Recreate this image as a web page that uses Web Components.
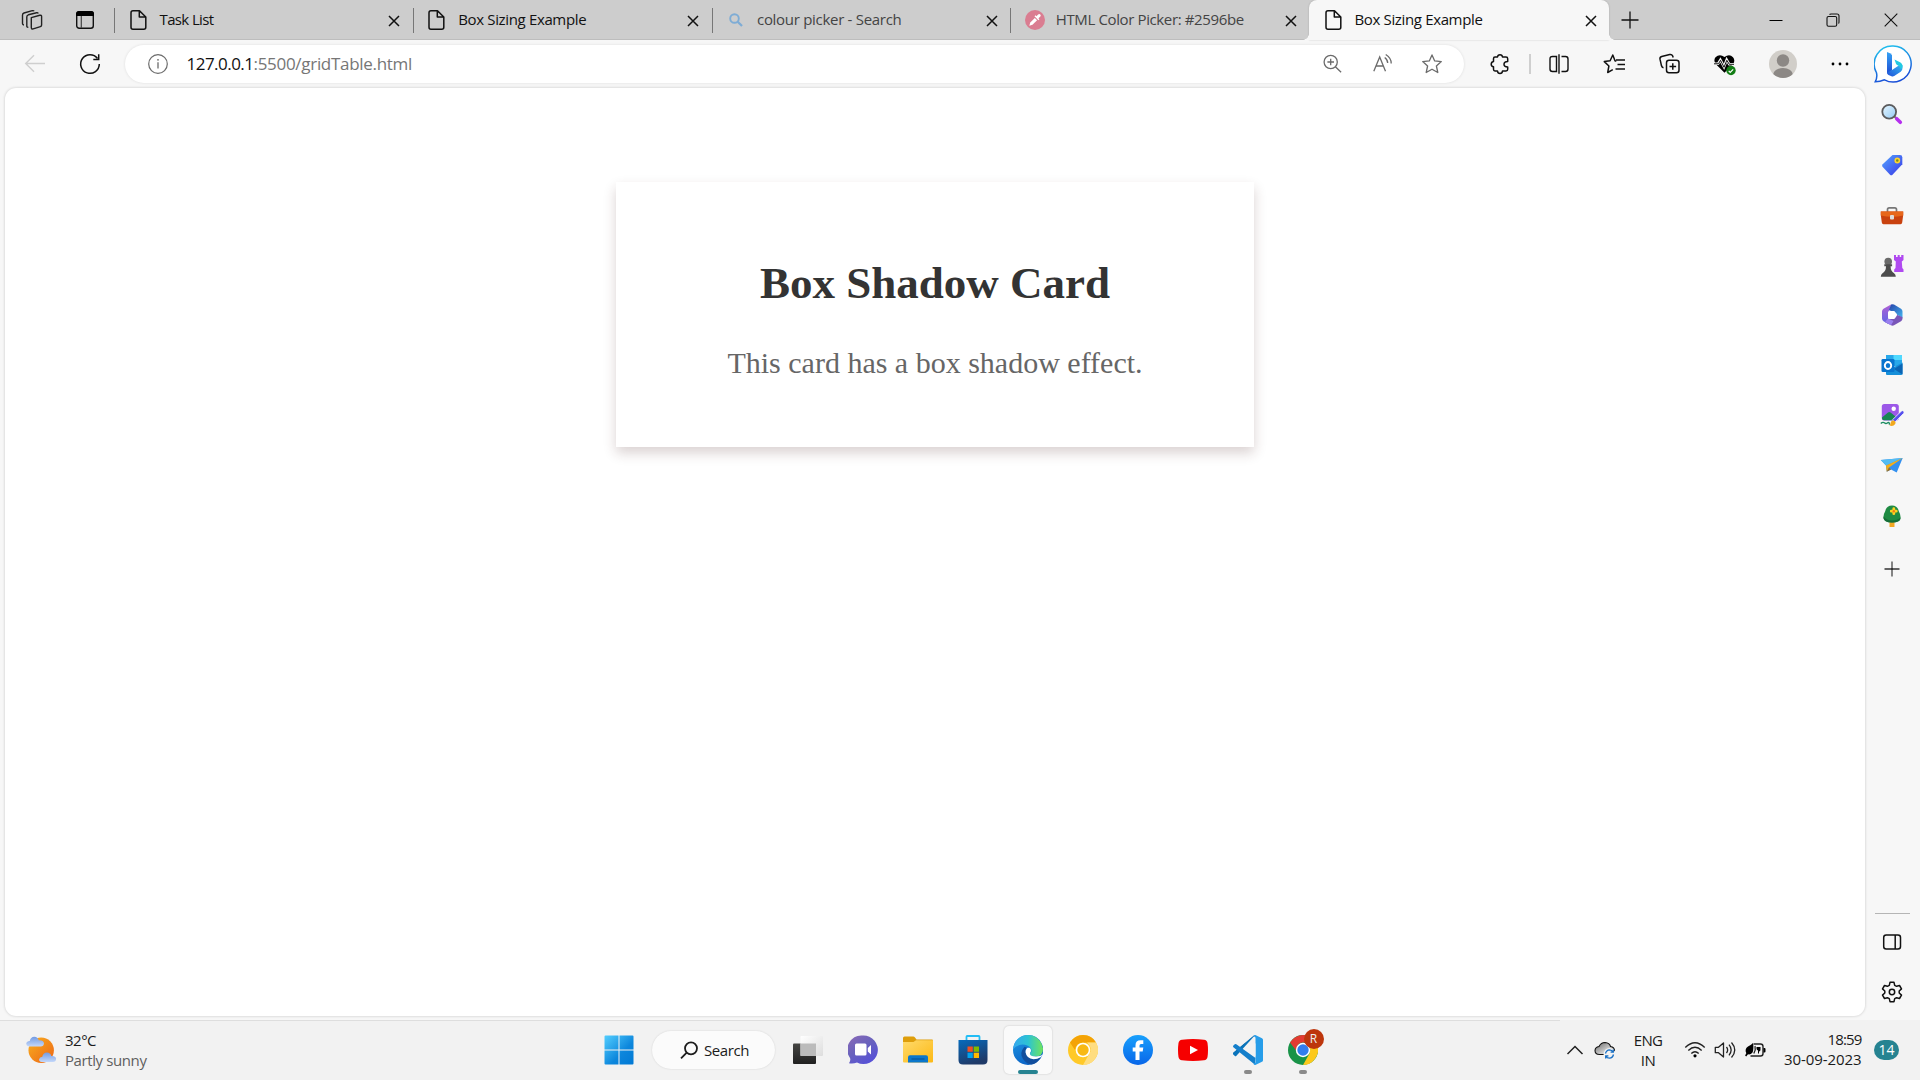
<!DOCTYPE html>
<html lang="en">
<head>
<meta charset="utf-8">
<title>Box Sizing Example</title>
<style>
html,body{margin:0;height:100%;overflow:hidden;background:#f7f7f7}
body{font-family:"Open Sans","Noto Sans",sans-serif}
</style>
</head>
<body>
<desktop-screen></desktop-screen>
<script>
const ICONS = {
workspaces:[24,24,`<g fill="none" stroke="#222" stroke-width="1.4" stroke-linejoin="round"><path d="M11.3 9.6l8.500-2.300q1.800-.4 1.800 1.300v8.400q0 1.200-1.200 1.600l-7.200 2.300q-1.900.5-1.900-1.300z"/><path d="M8.300 19.300q-1.500.2-1.500-1.400V9q0-1.700 1.600-2.200l8.200-2.100q1.300-.2 1.600.8"/><path d="M4 17q-1.500 0-1.500-1.400V7.200Q2.500 5.500 4 5l8.300-2.300q1.400-.3 1.700.6"/></g>`],
tabact:[24,24,`<rect x="3.700" y="3.700" width="16.600" height="16.600" rx="2.500" fill="none" stroke="#111" stroke-width="1.400"/><path d="M3 8V6q0-3 3-3h12q3 0 3 3v2z" fill="#000"/><path d="M8.300 8v12" stroke="#444" stroke-width="1.200"/>`],
page:[24,24,`<path d="M6 2.700h6.500l6.300 6.300v10.200q0 2-2 2H6q-2 0-2-2V4.700q0-2 2-2z M12.300 3v6h6.300" fill="none" stroke="#111" stroke-width="1.500" stroke-linejoin="round"/>`],
lens:[24,24,`<g fill="none" stroke="#7eacd5" stroke-width="1.900"><circle cx="10.500" cy="10.500" r="4.300"/><path d="M13.700 13.700l4.300 4.300" stroke-width="2.300"/></g>`],
picker:[24,24,`<circle cx="12" cy="12" r="10" fill="#da7d91"/><path d="M6.300 17.700l1-3.200 4.500-4.600 2.300 2.300-4.600 4.500z" fill="#fff"/><path d="M11.500 8.300l1-1 1 1 1.600-1.800q1.200-1.100 2.200 0 1 1.100-.1 2.200l-1.800 1.600 1 1-1 1z" fill="#fff"/>`],
x:[12,12,`<path d="M1 1l10 10M11 1L1 11" stroke="#111" stroke-width="1.500"/>`],
plus:[18,18,`<path d="M9 .5v17M.5 9h17" stroke="#111" stroke-width="1.300"/>`],
plus2:[16,16,`<path d="M8 .5v15" stroke="#777" stroke-width="1.800"/><path d="M.5 8h15" stroke="#000" stroke-width="1.200"/>`],
min:[14,14,`<path d="M.5 7.500h13" stroke="#000" stroke-width="1"/>`],
restore:[14,14,`<rect x="1" y="3.500" width="9.700" height="9.700" rx="1.500" fill="none" stroke="#111" stroke-width="1.100"/><path d="M3.500 1.500Q4 1 5 1h6q2 0 2 2v6q0 1-.5 1.500" fill="none" stroke="#111" stroke-width="1.100"/>`],
close:[14,14,`<path d="M.7.7l12.600 12.600M13.300.7L.7 13.300" stroke="#111" stroke-width="1.100"/>`],
back:[24,24,`<path d="M22 11.500H3M11 3.300L2.700 11.500 11 19.700" fill="none" stroke="#cfcfcf" stroke-width="1.400"/>`],
reload:[24,24,`<path d="M19.500 6.500A9.300 9.300 0 1 0 21.300 12" fill="none" stroke="#111" stroke-width="1.500"/><path d="M20.700 2.300v5.300h-5.400" fill="none" stroke="#111" stroke-width="1.500"/>`],
info:[24,24,`<circle cx="12" cy="12" r="9.300" fill="none" stroke="#6b6b6b" stroke-width="1.200"/><path d="M12 10.300v6.200" stroke="#6b6b6b" stroke-width="1.300"/><circle cx="12" cy="7.800" r=".9" fill="#6b6b6b"/>`],
zoom:[24,24,`<g fill="none" stroke="#6b6b6b" stroke-width="1.300"><circle cx="10.700" cy="10" r="6.600"/><path d="M15.400 14.700l5.700 5.500M7.400 10h6.600M10.700 6.700v6.600"/></g>`],
read:[24,24,`<g fill="none" stroke="#6b6b6b" stroke-width="1.300"><path d="M2.800 19.200L8.700 5l5.800 14.200M5 14h7.400"/><path d="M13.700 5.500q3 2.300 3 5.500M14.700 2.500q5.700 3.500 5.500 9"/></g>`],
star:[24,24,`<path d="M12 2.900l2.700 6 6.600.7-4.900 4.400 1.400 6.500L12 17.200l-5.800 3.300L7.600 14 2.700 9.600l6.600-.7z" fill="none" stroke="#6b6b6b" stroke-width="1.300" stroke-linejoin="round"/>`],
puzzle:[24,24,`<path d="M7 5h2.500q.2-2.300 2.500-2.300T14.500 5H18q1.700 0 1.700 1.700V9.500q-3.700.1-3.700 2.700t3.700 2.700V17.300q0 1.700-1.700 1.700h-3.500q-.2 2.500-2.500 2.500T9.500 19H7q-1.500 0-1.500-1.700v-2.500q-2.300-.3-2.300-2.600T5.500 9.500V6.700Q5.500 5 7 5z" fill="none" stroke="#111" stroke-width="1.500" stroke-linejoin="round"/>`],
split:[24,24,`<g fill="none" stroke="#111" stroke-width="1.400"><path d="M9.500 4.500h-4q-2.500 0-2.500 2.500v10q0 2.500 2.500 2.500h4zM14.500 4.500h4Q21 4.500 21 7v10q0 2.500-2.500 2.500h-4"/><path d="M12 2.300v19.500"/></g>`],
favs:[24,24,`<g fill="none" stroke="#111" stroke-width="1.500" stroke-linejoin="round"><path d="M13.300 8.900h-1.200L9.800 3 7.100 8.700l-5.800.9 4.600 4.400-1.200 6.500 5.100-2.800"/><path d="M13 7.900h9M14.500 12.400H22M12.500 17H22"/></g>`],
coll:[24,24,`<g fill="none" stroke="#111" stroke-width="1.500"><rect x="8.500" y="8.200" width="12.500" height="12.500" rx="2.500"/><path d="M14.800 11.200v6.600M11.500 14.500h6.600"/><path d="M5.500 15.700q-1.500-.2-2-1.900L2 7.200q-.4-2.100 1.700-2.700l8-2q2.100-.4 2.900 1.300l.6 1.700"/></g>`],
heart:[24,24,`<path d="M11.500 20.700L2.700 12Q.2 8.500 2.500 5.300 6.500 1.200 11.500 5q5-3.800 8.500.3 2.500 3.200.2 6.700z" fill="#000"/><path d="M0 11.800h5l2.400-4 3.600 7 2.700-7 2.600 4.500h6" fill="none" stroke="#f7f7f7" stroke-width="2.600"/><path d="M1 11.800h4.500l2-3.500 3.500 7 2.800-7 2.500 4H21" fill="none" stroke="#111" stroke-width="1"/><circle cx="18" cy="18.500" r="4.700" fill="#127d14"/><path d="M15.700 18.800l1.500 1.500 3-3" stroke="#fff" fill="none" stroke-width="1.200"/>`],
avatar:[28,28,`<clipPath id="a"><circle cx="14" cy="14" r="14"/></clipPath><g clip-path="url(#a)"><rect width="28" height="28" fill="#d1cec9"/><circle cx="14" cy="10.500" r="6.200" fill="#8c8885"/><ellipse cx="14" cy="25" rx="10" ry="7" fill="#8c8885"/></g>`],
dots:[24,24,`<circle cx="5" cy="12" r="1.400"/><circle cx="12" cy="12" r="1.400"/><circle cx="19" cy="12" r="1.400"/>`],
bing:[38,38,`<defs><linearGradient id="b" x2=".3" y2="1"><stop stop-color="#20c9ee"/><stop offset="1" stop-color="#1a50d8"/></linearGradient><linearGradient id="c" x2="0" y2="1"><stop stop-color="#35a3f5"/><stop offset="1" stop-color="#1d4cd2"/></linearGradient><linearGradient id="d" x1="1" y1="0" x2="0" y2="1"><stop stop-color="#35b8f2"/><stop offset="1" stop-color="#2050d8"/></linearGradient></defs><path d="M19 1a18 18 0 1 1-8.500 33.800q-4.500 1.900-9.300 2 2.500-4.500 1.200-9.300A18 18 0 0 1 19 1z" fill="#fff" stroke="url(#b)" stroke-width="1.500"/><path d="M13 7q3.500.8 5 3v15.500L14 29l-1-1.500z" fill="url(#c)"/><path d="M13 27.500l5-2.500 7.500-5h3v3q0 2.500-1.800 3.800l-6.500 4.300q-1.300.8-2.700.2l-3-1.200q-1.500-.8-1.500-2.600z" fill="url(#d)"/><path d="M20.500 14.500l6 3q2 1.200 2 3.700 0 2.500-2 3.600.5-3-2.500-4.300-1.500-.5-2-1.700z" fill="#22cbe2"/>`],
slens:[24,24,`<defs><linearGradient id="a" x2="1" y2="1"><stop stop-color="#e8f7ff"/><stop offset="1" stop-color="#92c9f4"/></linearGradient></defs><path d="M14.500 14.500l3 3" stroke="#777" stroke-width="2"/><path d="M16.700 16.700l3.600 3.600" stroke="#b52fee" stroke-width="3.600" stroke-linecap="round"/><circle cx="9.200" cy="9.800" r="6.900" fill="url(#a)" stroke="#5b5b5d" stroke-width="1.800"/>`],
tag:[24,24,`<defs><linearGradient id="a" x2="1" y2="1"><stop stop-color="#54a6ff"/><stop offset="1" stop-color="#3935e6"/></linearGradient></defs><path d="M12.500 2h7.500q2.300 0 2.300 2.300v7L12.500 21.700q-1.200 1-2.500 0l-7.500-8q-.9-1.200.2-2.400z" fill="url(#a)"/><circle cx="17.300" cy="7.500" r="2.100" fill="#75901c" stroke="#ffd32f" stroke-width="1.600"/>`],
toolbox:[24,24,`<path d="M7.500 8V5.500q0-1.700 1.700-1.700h5.600q1.700 0 1.700 1.700V8" fill="none" stroke="#777" stroke-width="1.700"/><path d="M.8 7.500h22.400v3.500l-1 7.500q-.2 1.800-1.700 1.800h-17q-1.500 0-1.700-1.800L.8 11z" fill="#c9420f"/><path d="M.8 7.500h22.400v4q-11 2.500-22.400 0z" fill="#e7671b"/><rect x="10" y="11" width="4" height="4.500" rx="1" fill="#ddd"/>`],
chess:[24,24,`<path d="M14 2h2v2h1.700V2h2v2h1.500V2h2.300v5l-1.700 1.500L22.300 15l1.200 1.500V19h-9.300v-2.500l1.300-1.500.3-6.500L14 7z" fill="#b04af0"/><circle cx="8.200" cy="8.500" r="3.800" fill="#6a6a6a"/><path d="M4.300 11.300h7.800v2h-1.500q0 5 3.500 7 1.700 1 1.700 3.500H.8q0-2.500 1.700-3.500 3.500-2 3.500-7H4.300z" fill="#4c4c4c"/>`],
m365:[24,24,`<defs><linearGradient id="a" x2="0" y2="1"><stop stop-color="#b05fd5"/><stop offset="1" stop-color="#5e66e4"/></linearGradient><linearGradient id="b" x2="1" y2="1"><stop stop-color="#2541a8"/><stop offset="1" stop-color="#43b5f0"/></linearGradient></defs><path d="M11 1.500L3.500 5.700Q2 6.700 2 8.500v7q0 1.800 1.500 2.800l4.500 2.500V10q0-2 1.800-3z" fill="url(#a)"/><path d="M11 1.500q1.500-.7 3 .1l7 4.100q1.500 1 1.500 2.800v6.200l-5.500-3V11L9 7z" fill="url(#b)"/><path d="M22.500 14v1.500q0 1.800-1.500 2.800l-7 4q-1.500.8-3 0L5 19l11-7.500z" fill="#7956b8"/><path d="M5 19l3-3.500 5.500 2.500-2.500 4.200z" fill="#9a80ef"/><path d="M10.300 8h3.400q1 0 1.500.9l1.600 2.300q.4.800 0 1.600l-1.600 2.300q-.5.900-1.500.9h-3.400q-1 0-1.500-.9L8 12.800V9.500z" fill="#fff"/>`],
outlook:[24,24,`<path d="M6 2h15q1 0 1 1v10H6z" fill="#28a8ea"/><path d="M13.500 2H21q1 0 1 1v4h-8.500z" fill="#50d9ff"/><path d="M6 10l8 4 8.500-4.500v11q0 1.500-1.500 1.500H7q-1 0-1-1z" fill="#168fd9"/><path d="M22.500 10.500v11L14 16z" fill="#0b64b3"/><rect x="1.500" y="6" width="13" height="13" rx="1.300" fill="#0874ce"/><ellipse cx="8" cy="12.500" rx="3.200" ry="3.500" fill="none" stroke="#fff" stroke-width="1.900"/>`],
paint:[24,24,`<rect x="1.800" y="1" width="17" height="16.500" rx="2.500" fill="#9c58e8"/><path d="M2 14.500l6-5q1.200-1 2.500 0l7 5.500q-1 2.300-3 2.300H4q-2 0-2-2.800z" fill="#178653"/><circle cx="13.700" cy="5.700" r="2.200" fill="#fff"/><path d="M12.500 16.700l8.800-8.500q1.300-1.100 2.400 0 .8 1.100-.2 2.300l-8.600 8.700z" fill="#5750ee" stroke="#f7f7f7" stroke-width=".8"/><path d="M9.500 22.500q1-1.200 1.200-3 .8-2.500 3-2 2.700 1 1.500 3.500-2 2.800-5.700 1.500z" fill="#f2a91d"/><path d="M.8 20.500q2-2 4-.5 1 1.200 3-.3 2-.7 1.500 2" fill="none" stroke="#1b8d61" stroke-width="1.400"/>`],
plane:[24,24,`<path d="M.8 7L22.700 5 16.700 19.500l-5.700-3-4.300 2.300-.7-6.300z" fill="#3390ef"/><path d="M.8 7L22.700 5 6 12.500z" fill="#54bcf2"/><path d="M6 12.500L22.700 5 9 14.500l-2.300 4.300z" fill="#f5ae16"/><path d="M6.700 18.800L9 14.500l2 2z" fill="#a66b16"/>`],
tree:[24,24,`<rect x="9.500" y="16" width="5" height="7" rx=".5" fill="#f3a822"/><path d="M12 1.500q5.500 0 6.700 5.500 2.300 4 1.800 7.500-1 4-8.500 4t-8.500-4Q3 11 5.300 7 6.500 1.500 12 1.500z" fill="#1f8b43"/><path d="M3.500 12.500q3 4 8.500 4t8.500-3q.5 5-8.500 5-9 0-8.500-6z" fill="#166d38"/><path d="M13.800 4.700v5M11.300 7.200h5" stroke="#ffd321" stroke-width="2.800" stroke-linecap="round"/><circle cx="13.800" cy="7.200" r="1.200" fill="#f27b17"/>`],
panel:[24,24,`<rect x="3.700" y="5" width="16.800" height="14" rx="2.500" fill="none" stroke="#111" stroke-width="1.500"/><path d="M15.200 5v14" stroke="#111" stroke-width="1.500"/>`],
gear:[24,24,`<path d="M10 2.300h4l.7 3 1.900 1 2.900-.8 2 3.400-2.300 2.100v2l2.300 2.100-2 3.400-2.900-.8-1.900 1-.7 3h-4l-.7-3-1.900-1-2.900.8-2-3.400L4.800 13v-2L2.500 8.900l2-3.400 2.900.8 1.900-1z" fill="none" stroke="#111" stroke-width="1.500" stroke-linejoin="round"/><circle cx="12" cy="12" r="2.700" fill="none" stroke="#111" stroke-width="1.500"/>`],
weather:[32,32,`<defs><linearGradient id="a" x2="1" y2="1"><stop stop-color="#f9b01f"/><stop offset="1" stop-color="#ec6416"/></linearGradient><linearGradient id="b" x2="0" y2="1"><stop stop-color="#729be4"/><stop offset="1" stop-color="#c4d8fa"/></linearGradient></defs><circle cx="16.200" cy="16.300" r="12.700" fill="url(#a)"/><path d="M4 12.500Q1.200 12 1.200 9.800 1.700 7 4.700 7q.8-4 4.700-4.200 3.300.2 4.300 3.500 4.800-.3 5.300 3-.3 3.200-3.300 3.200z" fill="url(#b)"/><path d="M16.600 28q-2.800-.5-2.500-2.800.5-2.400 3.200-2.500.7-4 4.700-4.200 3.500.2 4.300 3.500 4.300-.3 4.800 2.800-.2 3.200-3.200 3.200z" fill="url(#b)"/>`],
win:[30,30,`<defs><linearGradient id="a" gradientUnits="userSpaceOnUse" x1="0" y1="0" x2="30" y2="30"><stop stop-color="#55d0ff"/><stop offset=".6" stop-color="#0c86dc"/><stop offset="1" stop-color="#0078d4"/></linearGradient></defs><path d="M1.500.5h13v14h-14v-13q0-1 1-1zM15.500.5h13q1 0 1 1v13h-14zM.5 15.500h14v14h-13q-1 0-1-1zM15.500 15.500h14v13q0 1-1 1h-13z" fill="url(#a)"/>`],
tlens:[18,18,`<g fill="none" stroke="#1c1c1c" stroke-width="1.800"><circle cx="11" cy="7.300" r="6"/><path d="M6.700 11.600L1 17.300"/></g>`],
taskview:[30,30,`<defs><linearGradient id="a" x2="0" y2="1"><stop stop-color="#454543"/><stop offset="1" stop-color="#202020"/></linearGradient><linearGradient id="b" x2="1" y2="1"><stop stop-color="#fff"/><stop offset="1" stop-color="#ddd"/></linearGradient></defs><rect x="0" y="8.500" width="23" height="20.500" rx="1" fill="url(#a)"/><rect x="7.500" y="1" width="22.500" height="20" rx="1" fill="url(#b)"/><rect x="7.500" y="8.500" width="15.500" height="12.500" fill="#bbb"/>`],
chat:[30,30,`<defs><linearGradient id="a" x2=".7" y2="1"><stop stop-color="#8c6ab6"/><stop offset=".5" stop-color="#6962bd"/><stop offset="1" stop-color="#5650d8"/></linearGradient></defs><path d="M15 .5a14.300 14.300 0 1 1-6 27q-4 1.500-8 .7 2-3 1-5.200A14.300 14.300 0 0 1 15 .5z" fill="url(#a)"/><rect x="7" y="8.500" width="11.500" height="12" rx="1.500" fill="#fff"/><path d="M19.800 13l3.200-3v9.500l-3.200-3z" fill="#fff"/>`],
folder:[30,30,`<defs><linearGradient id="a" x2="1" y2="1"><stop stop-color="#ffda6b"/><stop offset="1" stop-color="#fcb915"/></linearGradient></defs><path d="M0 3q0-1.500 1.500-1.500h8.700q1 0 1.800 1L13.500 4.500H29q1 0 1 1V14H0z" fill="#de9e0b"/><path d="M0 7h10.500l2.500-1.700H30v21.200q0 1-1 1H1q-1 0-1-1z" fill="url(#a)"/><path d="M5 27.500v-5.200q0-2 2-2h16q2 0 2 2v5.200z" fill="#0b77cb"/><path d="M8.500 24h13" stroke="#08549b" stroke-width="1.200"/>`],
store:[30,30,`<defs><linearGradient id="a" x2=".4" y2="1"><stop stop-color="#066bbd"/><stop offset="1" stop-color="#1f3a68"/></linearGradient></defs><path d="M8.500 7V1.700q0-.7.7-.7h11.600q.7 0 .7.700V7" fill="none" stroke="#22bdf5" stroke-width="1.800"/><path d="M.5 5h29v20q0 4.500-4.500 4.500H5Q.5 29.500.5 25z" fill="url(#a)"/><path d="M9.500 11.500h5.300v5.300H9.500z" fill="#f25022"/><path d="M15.700 11.500H21v5.300h-5.300z" fill="#7fba00"/><path d="M9.500 17.700h5.300V23H9.500z" fill="#00a4ef"/><path d="M15.700 17.700H21V23h-5.300z" fill="#ffb900"/>`],
edge:[30,30,`<defs><linearGradient id="a" x1="0" x2="1"><stop stop-color="#36a7ef"/><stop offset=".5" stop-color="#2cc3d3"/><stop offset="1" stop-color="#70e55b"/></linearGradient><linearGradient id="b" x2=".4" y2="1"><stop stop-color="#1e9ae5"/><stop offset="1" stop-color="#0c64c6"/></linearGradient></defs><path d="M0 15A15 15 0 0 1 15 0a15 15 0 0 1 12.500 23.500Q22 30 15 30A15 15 0 0 1 0 15z" fill="url(#b)"/><path d="M0 14.500Q1.500 1.500 14 0 27 0 30 13.500q0 8-7.500 8-5 0-5.500-2.500-.2-1 1.200-2 1-4-4-6.500Q7 7 0 14.500z" fill="url(#a)"/><path d="M11.500 11.800Q6 18 10 24q3.500 5 9 5.500 5-1 8.500-6.500-1-1-2.500 0-6 1.500-10-2-4-4-1.500-8.500z" fill="#114e9d"/><path d="M16 12.200q-3.500.8-3.500 5 1 6.300 8 7 4 0 7.500-2.200l2-2.500q-2.500 2-7 2-5 0-6-2.200-.5-1.500.8-2.500.8-2.800-1.800-4.600z" fill="#fff"/>`],
canary:[30,30,`<circle cx="15" cy="15" r="15" fill="#ffc928"/><path d="M2 7.500Q7 0 15 0q9 0 13 7.500H15q-6.700 0-8 7.500z" fill="#f4a306"/><path d="M28 7.500q5 9-1.500 17Q22 30 15 30l7.500-13.500q1-5-3.500-9z" fill="#ffdd80"/><circle cx="15" cy="15" r="7.300" fill="#fff"/><circle cx="15" cy="15" r="5.700" fill="#f8b914"/>`],
facebook:[30,30,`<defs><linearGradient id="a" x2="0" y2="1"><stop stop-color="#18a0fc"/><stop offset="1" stop-color="#0866e9"/></linearGradient></defs><circle cx="15" cy="15" r="15" fill="url(#a)"/><path d="M12.500 25V16.500H9.700v-4h2.800v-2.300q0-5 5-5h2.800V9H18q-1.500 0-1.500 1.600v1.900h3.800l-.6 4h-3.200V25z" fill="#fff"/>`],
youtube:[30,30,`<path d="M4 4.700q11-1.300 22 0 3 .3 3.500 3.200 1 7 0 14-.5 3-3.500 3.400-11 1.200-22 0-3-.4-3.500-3.400-1-7 0-14Q1 5 4 4.700z" fill="#f60000"/><path d="M12 10.700l8 4.300-8 4.300z" fill="#fff"/>`],
vscode:[30,30,`<path d="M22.300 0L4 16.500.5 19.400q-.8-1 0-2L20.500.8z" fill="#0065a9"/><path d="M22 .3L3.200 20.900q-.7.500-1.400 0L.4 19.500q-.7-.8 0-1.700z" fill="#0a74bb"/><path d="M22 29.700L.4 12.200q-.7-.8 0-1.600l1.400-1.400q.7-.6 1.500 0L22.500 23z" fill="#147fcb"/><path d="M22.300 0l6.700 3.200q1 .5 1 1.600v20.400q0 1.100-1 1.600L22.300 30q-1 0-1.800-1l2-1.500v-25l-2-1.500q.8-1 1.800-1z" fill="#279de9"/><path d="M22.500 8.200v13.600L13.500 15z" fill="#f2f2f2"/>`],
chrome:[30,30,`<circle cx="15" cy="15" r="15" fill="#199348"/><path d="M2 7.500Q7 0 15 0q9 0 13 7.500H15q-6.700 0-6.500 8.500z" fill="#e33b32"/><path d="M28 7.500q5 9-1.500 17Q22 30 15 30l6.500-11.500q2-7-2.500-11z" fill="#fcc91c"/><circle cx="15" cy="15" r="7.200" fill="#fff"/><circle cx="15" cy="15" r="5.700" fill="#327ded"/>`],
chevron:[18,18,`<path d="M1.500 13L9 5.500l7.500 7.500" fill="none" stroke="#222" stroke-width="1.500"/>`],
cloud:[22,22,`<defs><linearGradient id="a" x2="1" y2="1"><stop stop-color="#666"/><stop offset=".6" stop-color="#ccc"/></linearGradient></defs><path d="M5.500 15.500Q1 15.500 1 11.600 1.200 8 5 7.500 7 3.500 11 3.500q4.500.3 5.500 4 4 .8 4 4 0 4-4.500 4z" fill="url(#a)" stroke="#111" stroke-width="1.100"/><circle cx="15.500" cy="15" r="6" fill="#f2f2f2"/><path d="M11.500 14.500q.8-3.500 4-3.700 2.500 0 3.600 2.200M19.500 15.500q-.8 3.500-4 3.700-2.500 0-3.600-2.200M19.300 10.500v2.700h-2.700M11.700 19.500v-2.700h2.700" fill="none" stroke="#176fc5" stroke-width="1.300"/>`],
wifi:[22,22,`<g fill="none" stroke="#222" stroke-width="1.400"><path d="M1.300 8.500q9.700-9.500 19.400 0M4.300 11.500q6.700-6.500 13.400 0M7.300 14.500q3.700-3.500 7.400 0"/></g><circle cx="11" cy="16.800" r="1.600"/>`],
sound:[22,22,`<g fill="none" stroke="#222" stroke-width="1.300"><path d="M1.300 8.300h3.200L9.500 4v14l-5-4.300H1.300z" stroke-linejoin="round"/><path d="M12.500 8q2.300 3 0 6M15 5.700q4.300 5.300 0 10.600M17.500 3.500q6.500 7.500 0 15"/></g>`],
battery:[22,22,`<path d="M9.500 5h7q2.500 0 2.500 2.500v7q0 2.500-2.500 2.500h-10" fill="none" stroke="#222" stroke-width="1.400"/><path d="M19.500 9h1q1 0 1 1v2.500q0 1-1 1h-1z"/><path d="M9 4q1 6-.5 9.500-2 2.500-4.500 1.800L2.200 17.500l-1.100-.9 1.200-2.300Q.3 10 4 7.500 7.500 5.500 9 4z"/><path d="M11 7q1 3.500-1.200 7.500" fill="none" stroke="#222" stroke-width="1.300"/><path d="M12.500 8h4v2.500q0 2-1.500 2v2h-1v-3q-1.500-.5-1.500-2z"/>`]
};

class UiIcon extends HTMLElement{
  connectedCallback(){
    const [w,h,body]=ICONS[this.getAttribute('name')];
    this.attachShadow({mode:'open'}).innerHTML=`<style>:host{display:block;flex:none;width:${w}px;height:${h}px}svg{display:block}</style><svg width="${w}" height="${h}" viewBox="0 0 ${w} ${h}">${body}</svg>`;
  }
}
customElements.define('ui-icon',UiIcon);

/* Text tracked so that its run is exactly w pixels wide. */
class FitText extends HTMLElement{
  connectedCallback(){
    this.attachShadow({mode:'open'}).innerHTML=`<style>:host{display:block;flex:none;white-space:pre}span{display:inline-block}</style><span><slot></slot></span>`;
    const s=this.shadowRoot.querySelector('span'),n=this.textContent.length;
    const d=(+this.getAttribute('w')-s.getBoundingClientRect().width)/n;
    s.style.letterSpacing=d.toFixed(3)+'px';
  }
}

class BrowserTab extends HTMLElement{
  connectedCallback(){
    this.attachShadow({mode:'open'}).innerHTML=`<style>
    :host{display:flex;align-items:center;box-sizing:border-box;width:298.75px;height:40px;flex:none;font-size:15px;line-height:22px;color:#111;position:relative}
    :host([dim]){color:#444}
    :host([active]){background:#f7f7f7;width:300px;border-radius:8px 8px 0 0;box-shadow:0 0 2px #0003}
    .sep{width:1px;height:25px;background:#777;margin-right:11.5px}
    :host([active]) .sep{visibility:hidden}
    .t{flex:1;padding:0 0 2px 9px;overflow:hidden}
    .x{margin:1px 12.5px 0 0}
    :host([active])::before,:host([active])::after{content:"";position:absolute;bottom:0;width:6px;height:6px}
    :host([active])::before{left:-6px;background:radial-gradient(circle at 0 0,#0000 5.5px,#f7f7f7 6px)}
    :host([active])::after{right:-6px;background:radial-gradient(circle at 100% 0,#0000 5.5px,#f7f7f7 6px)}
    </style><div class="sep"></div><ui-icon name="${this.getAttribute('icon')}"></ui-icon><div class="t"><slot></slot></div><ui-icon class="x" name="x"></ui-icon>`;
  }
}

class TabStrip extends HTMLElement{
  connectedCallback(){
    this.attachShadow({mode:'open'}).innerHTML=`<style>
    :host{display:flex;align-items:center;height:40px;background:#cdcdcd;box-shadow:inset 0 -1px #bdbdbd}
    </style>
    <ui-icon name="workspaces" style="margin-left:20px"></ui-icon><ui-icon name="tabact" style="margin:0 17px 0 29px"></ui-icon>
    <browser-tab icon="page"><fit-text w="54">Task List</fit-text></browser-tab>
    <browser-tab icon="page"><fit-text w="128">Box Sizing Example</fit-text></browser-tab>
    <browser-tab icon="lens" dim><fit-text w="144.5">colour picker - Search</fit-text></browser-tab>
    <browser-tab icon="picker" dim><fit-text w="188">HTML Color Picker: #2596be</fit-text></browser-tab>
    <browser-tab icon="page" active><fit-text w="128">Box Sizing Example</fit-text></browser-tab>
    <ui-icon name="plus" style="margin:0 0 1px 12px"></ui-icon>
    <ui-icon name="min" style="margin:0 0 1px auto"></ui-icon>
    <ui-icon name="restore" style="margin:0 0 1px 43px"></ui-icon>
    <ui-icon name="close" style="margin:0 22px 1px 44px"></ui-icon>`;
  }
}

class TopBar extends HTMLElement{
  connectedCallback(){
    this.attachShadow({mode:'open'}).innerHTML=`<style>
    :host{display:flex;align-items:center;height:48px;background:#f7f7f7}
    .addr{display:flex;align-items:center;box-sizing:border-box;width:1339px;height:38px;border-radius:19px;background:#fff;margin-left:23px;box-shadow:0 0 3px #0000001c;font-size:17px;line-height:24px;color:#767676}
    .addr>div{display:flex;flex:1;margin-left:17px}
    b{font-weight:400;color:#111}
    .sep{width:2px;height:20px;background:#cfcfcf;margin:0 16px 0 17.5px}
    </style>
    <ui-icon name="back" style="margin-left:23px"></ui-icon><ui-icon name="reload" style="margin-left:31px"></ui-icon>
    <div class="addr"><ui-icon name="info" style="margin-left:20.5px"></ui-icon><div><b><fit-text w="67">127.0.0.1</fit-text></b><fit-text w="158.5">:5500/gridTable.html</fit-text></div>
    <ui-icon name="zoom"></ui-icon><ui-icon name="read" style="margin-left:27px"></ui-icon><ui-icon name="star" style="margin:0 20px 0 25px"></ui-icon></div>
    <ui-icon name="puzzle" style="margin-left:23.5px"></ui-icon><div class="sep"></div>
    <ui-icon name="split"></ui-icon><ui-icon name="favs" style="margin-left:32px"></ui-icon><ui-icon name="coll" style="margin-left:31px"></ui-icon><ui-icon name="heart" style="margin-left:31px"></ui-icon><ui-icon name="avatar" style="margin-left:32px"></ui-icon><ui-icon name="dots" style="margin-left:31px"></ui-icon><ui-icon name="bing" style="margin-left:22px"></ui-icon>`;
  }
}

class SideBar extends HTMLElement{
  connectedCallback(){
    const items=[['slens',14],['tag',27],['toolbox',27],['chess',25],['m365',26],['outlook',26],['paint',26],['plane',26],['tree',27],['plus2',33]];
    this.attachShadow({mode:'open'}).innerHTML=`<style>
    :host{display:flex;flex-direction:column;align-items:center;box-sizing:border-box;width:55px;height:932px;padding:0 1px 16px 0}
    .line{width:35px;height:1px;background:#b5b5b5;margin:auto 0 16px}
    </style>${items.map(([n,m])=>`<ui-icon name="${n}" style="margin-top:${m}px"></ui-icon>`).join('')}
    <div class="line"></div><ui-icon name="panel"></ui-icon><ui-icon name="gear" style="margin-top:26px"></ui-icon>`;
  }
}

class ShadowCard extends HTMLElement{
  connectedCallback(){
    this.attachShadow({mode:'open'}).innerHTML=`<style>
    :host{display:block;box-sizing:border-box;width:638px;height:265px;padding-top:74px;background:#fff;text-align:center;font-family:"Liberation Serif",serif;box-shadow:0 6px 12px rgba(70,30,30,.2)}
    h2{margin:0 0 35px;font-size:45px;line-height:55px;color:#333}
    p{margin:0;font-size:30px;line-height:34px;color:#666}
    </style><h2><slot name="title"></slot></h2><p><slot></slot></p>`;
  }
}

class TaskBar extends HTMLElement{
  connectedCallback(){
    this.attachShadow({mode:'open'}).innerHTML=`<style>
    :host{display:flex;align-items:center;box-sizing:border-box;height:60px;background:linear-gradient(90deg,#dedede 1560px,#f2f2f2 1560px) top/100% 1px no-repeat #f2f2f2;color:#1b1b1b;font-size:15px;line-height:20px}
    .weather{display:flex;align-items:center;width:604px;box-sizing:border-box;padding-left:25px}
    .weather>div{margin-left:8px}
    .desc{color:#5f5f5f}
    .pill{display:flex;align-items:center;box-sizing:border-box;width:123px;height:38px;border-radius:19px;background:#fbfbfb;box-shadow:0 0 2px #0002;margin:0 5px 0 18px;padding-left:28px}
    .pill fit-text{margin-left:6px}
    .app{flex:none;width:55px;height:60px;display:flex;align-items:center;justify-content:center;position:relative}
    .tile{display:flex;align-items:center;justify-content:center;width:48px;height:48px;border-radius:5px}
    .on{background:#fafafa;box-shadow:0 0 2px #0003}
    .run::after{content:"";position:absolute;left:23.5px;top:50px;width:8px;height:4px;border-radius:2px;background:#8a8a8a}
    .act::after{left:17.5px;width:20px;background:#268391}
    .badge{position:absolute;left:28.5px;top:9px;width:20px;height:20px;border-radius:50%;background:#bd360c;color:#eee;font-size:12px;text-align:center;line-height:20px}
    .tray{display:flex;align-items:center;margin-left:auto}
    .lang{display:flex;flex-direction:column;align-items:center;width:64px}
    .clock{display:flex;flex-direction:column;align-items:flex-end;width:95.5px;margin-top:-2px}
    .n{width:25px;height:20px;border-radius:10px;background:#268391;color:#fff;text-align:center;margin:0 21px 0 12.5px;font-size:14px}
    </style>
    <div class="weather"><ui-icon name="weather"></ui-icon><div><fit-text w="31">32°C</fit-text><fit-text w="81.5" class="desc">Partly sunny</fit-text></div></div>
    <ui-icon name="win"></ui-icon>
    <div class="pill"><ui-icon name="tlens"></ui-icon><fit-text w="45">Search</fit-text></div>
    ${['taskview','chat','folder','store','edge','canary','facebook','youtube','vscode','chrome'].map(n=>`<div class="app ${n==='edge'?'run act':/vscode|chrome/.test(n)?'run':''}"><div class="tile ${n==='edge'?'on':''}"><ui-icon name="${n}"></ui-icon></div>${n==='chrome'?'<span class="badge">R</span>':''}</div>`).join('')}
    <div class="tray"><ui-icon name="chevron"></ui-icon><ui-icon name="cloud" style="margin-left:10px"></ui-icon>
    <div class="lang"><fit-text w="28.5">ENG</fit-text><fit-text w="14.5">IN</fit-text></div>
    <ui-icon name="wifi" style="margin-left:4px"></ui-icon><ui-icon name="sound" style="margin-left:8px"></ui-icon><ui-icon name="battery" style="margin-left:8px"></ui-icon>
    <div class="clock"><fit-text w="34">18:59</fit-text><fit-text w="77.5">30-09-2023</fit-text></div><div class="n">14</div></div>`;
  }
}

class DesktopScreen extends HTMLElement{
  connectedCallback(){
    this.attachShadow({mode:'open'}).innerHTML=`<style>
    :host{display:flex;flex-direction:column;width:1920px;height:1080px;overflow:hidden;background:#f7f7f7}
    .mid{display:flex;height:932px}
    main{display:flex;justify-content:center;align-items:flex-start;box-sizing:border-box;width:1860px;height:928px;margin-left:5px;padding-top:94px;background:#fff;border-radius:11px;box-shadow:0 0 3px #0003}
    </style><tab-strip></tab-strip><top-bar></top-bar><div class="mid"><main><shadow-card><span slot="title">Box Shadow Card</span>This card has a box shadow effect.</shadow-card></main><side-bar></side-bar></div><task-bar></task-bar>`;
  }
}
customElements.define('browser-tab',BrowserTab);
customElements.define('tab-strip',TabStrip);
customElements.define('top-bar',TopBar);
customElements.define('side-bar',SideBar);
customElements.define('shadow-card',ShadowCard);
customElements.define('task-bar',TaskBar);
customElements.define('desktop-screen',DesktopScreen);
customElements.define('fit-text',FitText);
</script>
</body>
</html>
